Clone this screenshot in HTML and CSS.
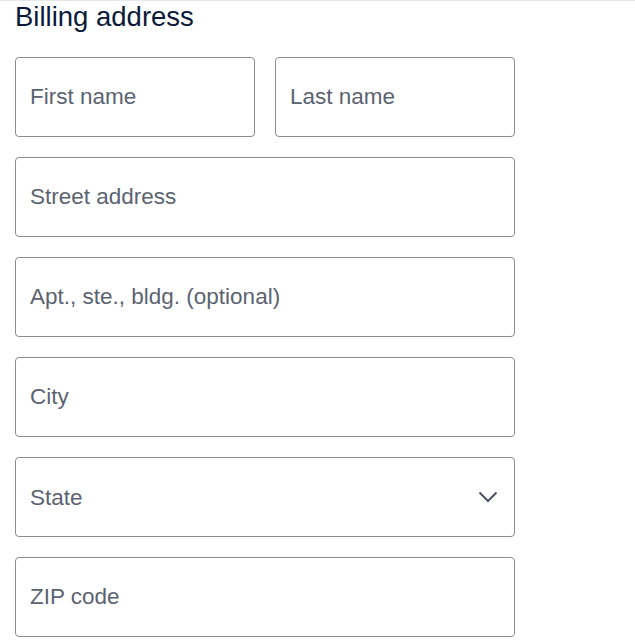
FILE: index.html
```html
<!DOCTYPE html>
<html lang="en">
<head>
    <meta charset="UTF-8">
    <title>Billing address</title>
    <link rel="stylesheet" href="styles.css">
</head>
<body>
    <div class="billing">
        <h2 class="billing-title">Billing address</h2>

        <div class="form-grid">
            <div class="row two-col">
                <input type="text" class="field" placeholder="First name">
                <input type="text" class="field" placeholder="Last name">
            </div>
            <input type="text" class="field" placeholder="Street address">
            <input type="text" class="field" placeholder="Apt., ste., bldg. (optional)">
            <input type="text" class="field" placeholder="City">

            <!-- State dropdown -->
            <div class="select-wrap">
                <select class="field select-field">
                    <option value="">State</option>
                </select>
                <svg class="chevron" width="20" height="12" viewBox="0 0 20 12">
                    <path d="M1.5 1.5 L10 10 L18.5 1.5" fill="none" stroke="#4b5262" stroke-width="2"/>
                </svg>
            </div>

            <input type="text" class="field" placeholder="ZIP code">
        </div>
    </div>
</body>
</html>
```

FILE: styles.css
```css
body {
    margin: 0;
    font-family: "Liberation Sans", Arial, sans-serif;
    background: #fff;
    border-top: 1px solid #e8e8e8;
}
.billing {
    padding: 1px 15px 0;
    width: 500px;
}
.billing-title {
    margin: 0 0 25px;
    font-size: 27.5px;
    line-height: 30px;
    font-weight: normal;
    color: #0b1a3b;
}
.form-grid {
    display: flex;
    flex-direction: column;
    gap: 20px;
}
.two-col {
    display: grid;
    grid-template-columns: 1fr 1fr;
    gap: 20px;
}
.field {
    box-sizing: border-box;
    width: 100%;
    height: 80px;
    margin: 0;
    padding: 0 14px;
    border: 1px solid #8c8c8c;
    border-radius: 4px;
    background: #fff;
    font-family: "Liberation Sans", Arial, sans-serif;
    font-size: 22.5px;
    color: #5b6371;
    outline: none;
}
.field::placeholder {
    color: #5b6371;
    opacity: 1;
}
.select-wrap {
    position: relative;
}
.select-field {
    appearance: none;
    -webkit-appearance: none;
    padding-left: 14px;
}
.chevron {
    position: absolute;
    right: 17px;
    top: 34px;
    pointer-events: none;
}
```
